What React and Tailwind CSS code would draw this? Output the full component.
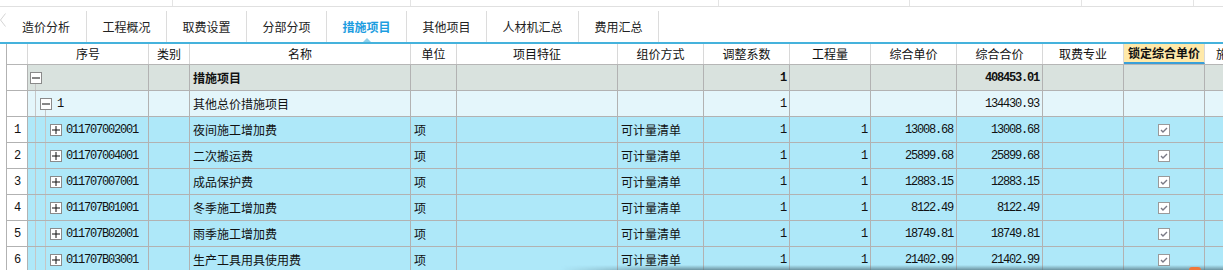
import React from 'react'

const tabs = [
  { label: '造价分析', w: 'w-[81px]' },
  { label: '工程概况', w: 'w-[80px]' },
  { label: '取费设置', w: 'w-[80px]' },
  { label: '分部分项', w: 'w-[80px]' },
  { label: '措施项目', w: 'w-[80px]', active: true },
  { label: '其他项目', w: 'w-[80px]' },
  { label: '人材机汇总', w: 'w-[92px]' },
  { label: '费用汇总', w: 'w-[80px]' },
]

// column widths include the right border
const cw = [
  'w-[21px]', 'w-[121px]', 'w-[41px]', 'w-[221px]', 'w-[46px]', 'w-[161px]', 'w-[86px]',
  'w-[86px]', 'w-[81px]', 'w-[86px]', 'w-[86px]', 'w-[81px]', 'w-[81px]', 'w-[120px]',
]

const heads = ['', '序号', '类别', '名称', '单位', '项目特征', '组价方式', '调整系数', '工程量', '综合单价', '综合合价', '取费专业', '锁定综合单价', '施工组织措施类别']

const items = [
  ['011707002001', '夜间施工增加费', '13008.68'],
  ['011707004001', '二次搬运费', '25899.68'],
  ['011707007001', '成品保护费', '12883.15'],
  ['011707B01001', '冬季施工增加费', '8122.49'],
  ['011707B02001', '雨季施工增加费', '18749.81'],
  ['011707B03001', '生产工具用具使用费', '21402.99'],
]

const cjk = "font-['Noto_Sans_CJK_SC','Liberation_Sans',sans-serif]"
const num = "font-['Liberation_Mono','DejaVu_Sans_Mono',monospace] text-[12px] tracking-[-1.2px]"

function Box({ plus }) {
  return (
    <span className="self-center w-[12px] h-[12px] border border-[#8a8a8a] bg-white flex items-center justify-center shrink-0">
      <svg width="8" height="8" viewBox="0 0 8 8">
        <path d="M0 4h8" stroke="#111" strokeWidth="1" />
        {plus && <path d="M4 0v8" stroke="#111" strokeWidth="1" />}
      </svg>
    </span>
  )
}

function Check() {
  return (
    <span className="w-[12px] h-[12px] border border-[#9a9a9a] bg-white flex items-center justify-center">
      <svg width="10" height="10" viewBox="0 0 10 10">
        <path d="M2 5l2 2 4-4" stroke="#7a7a86" strokeWidth="1.4" fill="none" />
      </svg>
    </span>
  )
}

function Cell({ i, className = '', children }) {
  return (
    <div className={`${cw[i]} shrink-0 h-full border-r border-[#b2b2b2] flex items-center overflow-hidden whitespace-nowrap ${className}`}>
      {children}
    </div>
  )
}

function Row({ bg, no, tree, name, bold, unit, way, coef, qty, price, total, check }) {
  return (
    <div className={`flex h-[26px] border-b border-[#b2b2b2] ${bg}`}>
      <Cell i={0} className={`bg-white justify-center ${num}`}>{no}</Cell>
      <Cell i={1} className="items-stretch">{tree}</Cell>
      <Cell i={2} />
      <Cell i={3} className={`pl-[3px] text-[12px] ${cjk} ${bold ? 'font-bold' : ''}`}>{name}</Cell>
      <Cell i={4} className={`pl-[3px] text-[12px] ${cjk}`}>{unit}</Cell>
      <Cell i={5} />
      <Cell i={6} className={`pl-[3px] text-[12px] ${cjk}`}>{way}</Cell>
      <Cell i={7} className={`justify-end pr-[3px] ${num} ${bold ? 'font-bold' : ''}`}>{coef}</Cell>
      <Cell i={8} className={`justify-end pr-[3px] ${num}`}>{qty}</Cell>
      <Cell i={9} className={`justify-end pr-[3px] ${num}`}>{price}</Cell>
      <Cell i={10} className={`justify-end pr-[3px] ${num} ${bold ? 'font-bold' : ''}`}>{total}</Cell>
      <Cell i={11} />
      <Cell i={12} className="justify-center">{check && <Check />}</Cell>
      <Cell i={13} />
    </div>
  )
}

export default function App() {
  return (
    <div className={`relative w-[1223px] h-[270px] overflow-hidden bg-white text-[#111] ${cjk}`}>
      {/* toolbar remnant */}
      <div className="flex h-[7px] border-b border-[#e0e0e0]">
        <div className="w-[173px] border-r border-[#e4e4e4]" />
        <div className="w-[238px] border-r border-[#e4e4e4]" />
        <div className="w-[308px] border-r border-[#e4e4e4]" />
        <div className="w-[191px] border-r border-[#e4e4e4]" />
        <div className="w-[172px] border-r border-[#e4e4e4]" />
        <div className="w-[112px] border-r border-[#e4e4e4]" />
      </div>
      <div className="h-[4px]" />

      {/* tabs */}
      <div className="flex h-[31px]">
        <div className="w-[6px] flex items-start pt-[2px]">
          <svg width="6" height="14" viewBox="0 0 6 14">
            <path d="M5.5 0.5L0.5 7l5 6.5" stroke="#d4d4d4" fill="none" />
          </svg>
        </div>
        {tabs.map(t => (
          <div key={t.label} className={`${t.w} relative shrink-0 h-full border-r border-[#dcdcdc] flex items-center justify-center text-[12px] ${t.active ? 'text-[#1c9de0] font-bold' : 'text-[#222]'}`}>
            {t.label}
            {t.active && (
              <svg className="absolute bottom-0 left-[36px]" width="8" height="4" viewBox="0 0 8 4">
                <path d="M0 4L4 0l4 4z" fill="#8fd0ea" />
              </svg>
            )}
          </div>
        ))}
      </div>
      <div className="h-[2px] bg-[#45b2dc]" />

      {/* grid */}
      <div className="ml-[6px] border-l border-[#b2b2b2]">
        <div className="flex h-[21px] border-b border-[#b6b6b6] bg-white">
          {heads.map((h, i) => (
            <div key={i} className={`${cw[i]} shrink-0 h-full border-r border-[#d8d8d8] flex items-center overflow-hidden whitespace-nowrap text-[12px] ${i === 13 ? 'justify-start pl-[11px]' : 'justify-center'} ${i === 12 ? 'bg-[#ffe9a9] font-bold border-b-2 border-b-[#3a9fd8]' : ''}`}>
              {h}
            </div>
          ))}
        </div>

        <Row
          bg="bg-[#d9e2de]"
          bold
          name="措施项目"
          coef="1"
          total="408453.01"
          tree={
            <div className="flex items-stretch">
              <span className="w-[2px]" />
              <div className="flex flex-col">
                <span className="flex-1" />
                <Box />
                <span className="flex-1 w-[6px] border-r border-[#c6c6c6]" />
              </div>
            </div>
          }
        />
        <Row
          bg="bg-[#e4f6fb]"
          name="其他总价措施项目"
          coef="1"
          total="134430.93"
          tree={
            <div className="flex items-stretch">
              <span className="w-[8px] border-r border-[#c6c6c6]" />
              <span className="w-[4px]" />
              <div className="flex flex-col">
                <span className="flex-1" />
                <Box />
                <span className="flex-1 w-[6px] border-r border-[#c6c6c6]" />
              </div>
              <span className={`self-center pl-[5px] ${num}`}>1</span>
            </div>
          }
        />
        {items.map(([code, name, price], idx) => (
          <Row
            key={code}
            bg="bg-[#aee8f9]"
            no={idx + 1}
            name={name}
            unit="项"
            way="可计量清单"
            coef="1"
            qty="1"
            price={price}
            total={price}
            check
            tree={
              <div className="flex items-stretch">
                <span className="w-[8px] border-r border-[#c6c6c6]" />
                <span className="w-[10px] border-r border-[#c6c6c6]" />
                <span className="w-[4px]" />
                <Box plus />
                <span className={`self-center pl-[4px] ${num}`}>{code}</span>
              </div>
            }
          />
        ))}
      </div>

      {/* overlay shadow from a floating panel below */}
      <div className="absolute bottom-0 left-[560px] right-0 h-[5px] bg-gradient-to-b from-[#5a7d8a]/0 to-[#4f6f7a]/70 [mask-image:linear-gradient(to_right,transparent,black_120px)]" />
      <div className="absolute bottom-0 left-[1189px] w-[12px] h-[3px] rounded-t-full bg-[#f0773a]" />
    </div>
  )
}
